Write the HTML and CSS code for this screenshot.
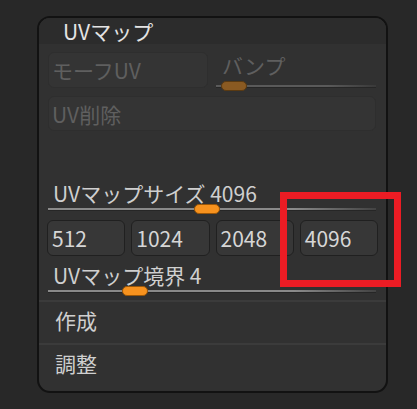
FILE: index.html
```html
<!DOCTYPE html>
<html lang="ja">
<head>
<meta charset="utf-8">
<link rel="stylesheet" href="styles.css">
</head>
<body>
<div class="panel">
  <div class="header">UVマップ</div>
  <div class="body">
    <div class="row1">
      <div class="btn disabled morph">モーフUV</div>
      <div class="bump">
        <div class="bump-label">バンプ</div>
        <div class="slider dim"><span class="track"></span><span class="handle dull" style="left:5px"></span></div>
      </div>
    </div>
    <div class="btn disabled wide">UV削除</div>
    <div class="label first">UVマップサイズ 4096</div>
    <div class="slider"><span class="track"></span><span class="handle" style="left:146px"></span></div>
    <div class="sizes">
      <div class="btn num">512</div>
      <div class="btn num">1024</div>
      <div class="btn num">2048</div>
      <div class="btn num">4096</div>
    </div>
    <div class="label second">UVマップ境界 4</div>
    <div class="slider"><span class="track"></span><span class="handle" style="left:74px"></span></div>
  </div>
  <div class="item">作成</div>
  <div class="item last">調整</div>
</div>
<div class="highlight"></div>
</body>
</html>
```
FILE: styles.css
```css
html, body {
  margin: 0;
  padding: 0;
}
body {
  background: #282828;
  width: 417px;
  height: 409px;
  overflow: hidden;
  position: relative;
  font-family: "Noto Sans CJK JP", "Noto Sans", sans-serif;
  font-size: 21px;
}
.panel {
  margin: 16px 0 0 37px;
  width: 351px;
  height: 377px;
  box-sizing: border-box;
  border: 2px solid #121212;
  border-radius: 13px;
  background: #313131;
  overflow: hidden;
}
.header {
  height: 26px;
  line-height: 26px;
  background: #2c2c2c;
  color: #e4e4e4;
  padding-left: 24px;
}
.body {
  padding: 0 8px 0 9px;
}
.row1 {
  display: flex;
  margin-top: 8px;
  height: 36px;
}
.btn {
  box-sizing: border-box;
  border-radius: 6px;
  display: flex;
  align-items: center;
  padding-left: 3px;
}
.disabled {
  background: #343434;
  border: 1px solid #2e2e2e;
  color: #5f5f5f;
}
.morph {
  width: 160px;
  height: 36px;
}
.bump {
  flex: 1;
  margin-left: 8px;
  position: relative;
}
.bump-label {
  color: #5f5f5f;
  line-height: 22px;
  margin-top: 2px;
  padding-left: 6px;
}
.bump .slider {
  margin-top: 5px;
}
.wide {
  margin-top: 8px;
  height: 35px;
  width: 328px;
}
.label {
  color: #cfcfcf;
  line-height: 22px;
  height: 22px;
  padding-left: 5px;
}
.label.first {
  margin-top: 51px;
}
.label.second {
  margin-top: 8px;
}
.slider {
  position: relative;
  height: 10px;
}
.track {
  position: absolute;
  left: 0;
  right: 2px;
  top: 4px;
  height: 2px;
  background: linear-gradient(to right, #8a8a8a, #8a8a8a 75%, rgba(138,138,138,0.2));
  box-shadow: 0 1px 0 #262626;
}
.dim .track {
  background: linear-gradient(to right, #5a5a5a, #5a5a5a 70%, rgba(90,90,90,0.2));
}
.handle {
  position: absolute;
  top: 0;
  width: 26px;
  height: 10px;
  box-sizing: border-box;
  border-radius: 5px;
  background: #f7921e;
  border: 1px solid #9a5608;
}
.handle.dull {
  background: #8a5a22;
  border-color: #5a3a12;
}
.sizes {
  display: grid;
  grid-template-columns: repeat(4, 1fr);
  column-gap: 6px;
  margin: 6px 0 0 -1px;
  width: 331px;
}
.num {
  height: 36px;
  background: #373737;
  border: 1px solid #202020;
  color: #d6d6d6;
  padding-left: 4px;
}
.item {
  border-top: 2px solid #3b3b3b;
  color: #cfcfcf;
  height: 41px;
  line-height: 36px;
  padding-left: 16px;
}
.body + .item {
  margin-top: 4px;
}
.highlight {
  position: absolute;
  left: 280px;
  top: 192px;
  width: 121px;
  height: 95px;
  box-sizing: border-box;
  border: 7px solid #ec1c24;
}
```
